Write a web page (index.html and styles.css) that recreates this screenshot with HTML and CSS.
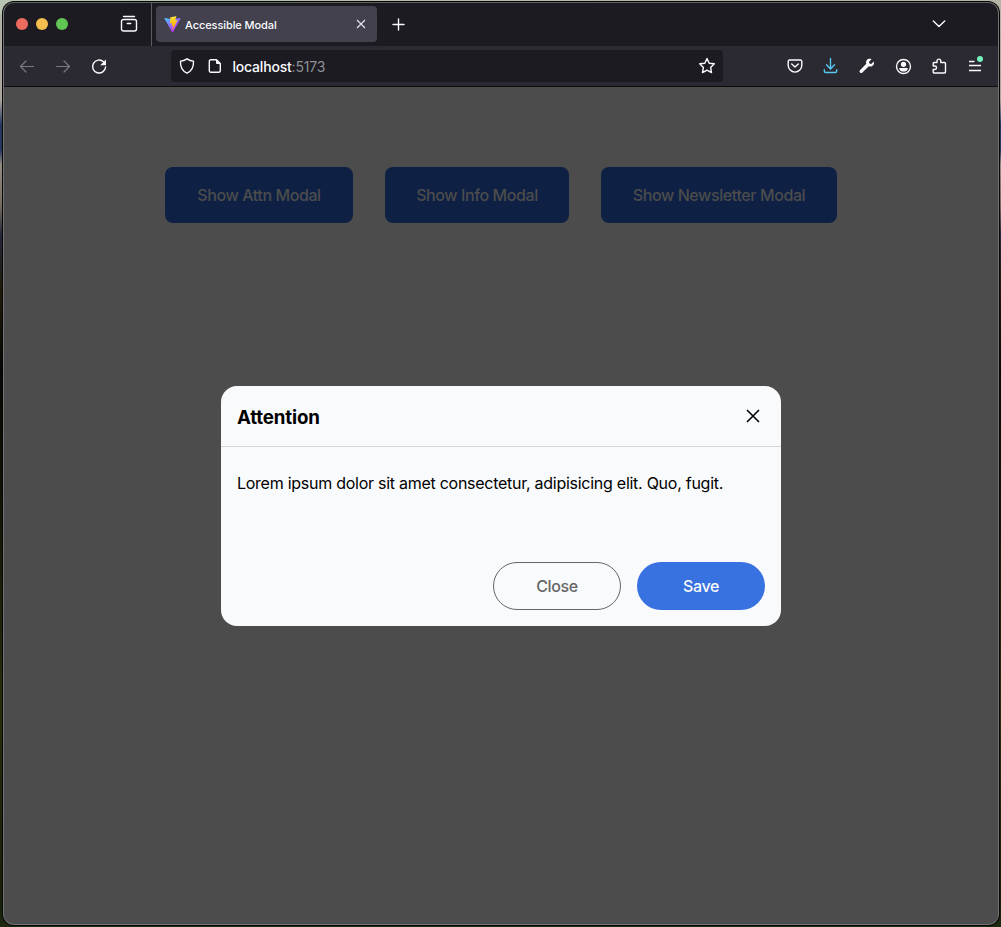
FILE: index.html
```html
<!DOCTYPE html>
<html lang="en">
<head>
<meta charset="utf-8">
<title>Accessible Modal</title>
<link rel="stylesheet" href="styles.css">
</head>
<body>
<div class="window">
  <div class="tabbar">
    <div class="lights"><i class="light red"></i><i class="light yellow"></i><i class="light green"></i></div>
    <svg class="icon view" viewBox="0 0 18 18"><path d="M3.500 1.500h11M3.500 4.500h11a2 2 0 0 1 2 2v7.500a2 2 0 0 1-2 2h-11a2 2 0 0 1-2-2V6.500a2 2 0 0 1 2-2zM7.300 8.500h3.400"/></svg>
    <div class="tab">
      <svg class="vite" viewBox="0 0 410 404">
        <defs>
          <linearGradient id="shield" x1="6" y1="33" x2="235" y2="344" gradientUnits="userSpaceOnUse"><stop stop-color="#41d1ff"/><stop offset="1" stop-color="#bd34fe"/></linearGradient>
          <linearGradient id="bolt" x1="195" y1="9" x2="236" y2="293" gradientUnits="userSpaceOnUse"><stop stop-color="#ffea83"/><stop offset=".08" stop-color="#ffdd35"/><stop offset="1" stop-color="#ffa800"/></linearGradient>
        </defs>
        <path fill="url(#shield)" d="M399.600 59.500 215.600 388.500c-3.800 6.800-13.500 6.900-17.400.100L10.600 59.600c-4.200-7.400 2.100-16.400 10.500-14.900l184.200 32.900c1.200.2 2.400.2 3.500 0l180.300-32.900c8.400-1.500 14.800 7.400 10.500 14.800z"/>
        <path fill="url(#bolt)" d="M293 1.600 156.800 28.300c-2.200.4-3.900 2.300-4 4.600l-8.400 141.400c-.2 3.300 2.900 5.900 6.100 5.200l37.900-8.800c3.500-.8 6.700 2.300 6 5.900l-11.300 55.100c-.8 3.700 2.700 6.900 6.300 5.800l23.400-7.100c3.600-1.100 7.100 2.100 6.300 5.800l-17.900 86.600c-1.100 5.400 6.100 8.400 9.100 3.700l2-3.100L323.400 101.700c1.800-3.700-1.300-7.900-5.400-7.100l-39 7.500c-3.700.7-6.800-2.700-5.700-6.300L298.700 7.600c1-3.600-2-7-5.700-6z"/>
      </svg>
      <span class="tab-title">Accessible Modal</span>
      <svg class="tab-x" viewBox="0 0 10 10"><path d="m1 1 8 8M9 1 1 9"/></svg>
    </div>
    <svg class="icon plus" viewBox="0 0 12 12"><path d="M5.500 0v11M0 5.500h11"/></svg>
    <svg class="icon chevron" viewBox="0 0 14 8"><path d="m1.300 1 5.700 5.500L12.700 1"/></svg>
  </div>
  <div class="toolbar">
    <svg class="icon back" viewBox="0 0 16 16"><path d="M14.500 8.500H1.800M7 3 1.500 8.500 7 14"/></svg>
    <svg class="icon forward" viewBox="0 0 16 16"><path d="M1.500 8.500h12.700M9 3l5.500 5.500L9 14"/></svg>
    <svg class="icon reload" viewBox="0 0 16 16"><path d="M12.500 3.700A6.500 6.500 0 1 0 14.600 9"/><path class="solid" d="M15 1.500v5.200a.6.6 0 0 1-.6.6H9.200z"/></svg>
    <div class="urlbar">
      <svg class="icon shield" viewBox="0 0 16 16"><path d="M8 .8c2 1.300 4.300 2.100 6.500 2.300.3 4.700-1.100 9.500-6.500 12.100C2.600 12.600 1.200 7.800 1.500 3.100 3.700 2.900 6 2.100 8 .8z"/></svg>
      <svg class="icon page" viewBox="0 0 14 16"><path d="M2.800 1.800h5.700l3.800 3.800v7.100a1.500 1.500 0 0 1-1.500 1.500h-8a1.500 1.500 0 0 1-1.500-1.500V3.300a1.500 1.500 0 0 1 1.500-1.500z"/><path class="solid" d="M8 1.500v3.600a1 1 0 0 0 1 1h3.500z"/></svg>
      <span class="url">localhost<span class="port">:5173</span></span>
      <svg class="icon star" viewBox="0 0 18 18"><path d="m9 1.500 2.200 4.700 5.100.6-3.700 3.600.9 5.200L9 13.100l-4.500 2.500.9-5.200L1.700 6.800l5.100-.6z"/></svg>
    </div>
    <div class="actions">
      <svg class="icon" viewBox="0 0 16 16"><path d="M2.500 2h11a1.300 1.300 0 0 1 1.300 1.300v4A6.800 6.800 0 0 1 1.200 7.300v-4A1.300 1.300 0 0 1 2.500 2zM4.700 6 8 9.100 11.300 6"/></svg>
      <svg class="icon download" viewBox="0 0 16 16"><path d="M7.500.5v10.300M3.500 6.800l4 4.200 4-4.200M1.300 11.800v1.200a1.500 1.500 0 0 0 1.500 1.500h9.400a1.500 1.500 0 0 0 1.500-1.500v-1.200"/></svg>
      <svg class="icon" viewBox="0 0 16 16"><path class="solid" d="M14.700 3.600 12.300 6l-1.900-.4-.4-1.900 2.500-2.500C10.700.5 8.700.8 7.700 2.300c-.8 1.100-.8 2.400-.4 3.500L1 12.200a1.600 1.600 0 0 0 2.400 2.300l6.400-6.300c1.600.6 3.300.2 4.400-1 .9-1 1-2.400.5-3.600z"/></svg>
      <svg class="icon account" viewBox="0 0 16 16"><circle cx="8.500" cy="8.500" r="7"/><circle class="solid" cx="8.500" cy="6.300" r="2.600"/><path class="solid" d="M4.200 9.900h8.600c0 2.500-1.900 3.600-4.300 3.600s-4.300-1.100-4.300-3.600z"/></svg>
      <svg class="icon" viewBox="0 0 16 16"><path d="M6 4.500V3a1.900 1.900 0 0 1 3.800 0v1.500h3.700a1 1 0 0 1 1 1V14a1 1 0 0 1-1 1H3.200a1 1 0 0 1-1-1v-2.500h1.600a1.700 1.700 0 0 0 0-3.500H2.200V5.500a1 1 0 0 1 1-1z"/></svg>
      <svg class="icon menu" viewBox="0 0 16 16"><path d="M2 3.500h5.500M2 7.500h12M2 12.500h12"/><circle class="dot" cx="13" cy="1" r="3"/></svg>
    </div>
  </div>
  <main class="content">
    <div class="triggers">
      <button class="trigger attn">Show Attn Modal</button>
      <button class="trigger info">Show Info Modal</button>
      <button class="trigger news">Show Newsletter Modal</button>
    </div>
    <section class="modal" role="dialog" aria-labelledby="modal-title">
      <header class="modal-head">
        <h1 class="modal-title" id="modal-title">Attention</h1>
        <svg class="modal-x" viewBox="0 0 14 14"><path d="m1 1 12 12M13 1 1 13"/></svg>
      </header>
      <p class="modal-text">Lorem ipsum dolor sit amet consectetur, adipisicing elit. Quo, fugit.</p>
      <footer class="modal-foot">
        <button class="pill outline">Close</button>
        <button class="pill primary">Save</button>
      </footer>
    </section>
  </main>
</div>
</body>
</html>
```
FILE: styles.css
```css
* { box-sizing: border-box; }

body {
  margin: 0;
  height: 927px;
  padding: 2px 2px 2px 3px;
  overflow: hidden;
  font-family: Inter, "Liberation Sans", sans-serif;
  background:
    linear-gradient(90deg, #b9c4b2, #b5b3a5) 0 0 / 100% 14px no-repeat,
    linear-gradient(#b5b3aa 0, #aaa59d 100px, #263760 125px, #263760 150px, #918b82 165px, #776d62 205px, #25283a 235px, #201b0b 290px, #080705 370px, #151306 500px, #292d0c 700px, #182009 900px, #1c2a10 927px);
}

.window {
  width: 996px;
  height: 923px;
  display: flex;
  flex-direction: column;
  overflow: hidden;
  border: 1px solid #747474;
  border-top-color: #5c625d;
  border-radius: 11px;
  box-shadow: 0 0 0 1px #050505;
  background: #4c4c4c;
}

svg { display: block; flex: none; }

.icon {
  width: 16px;
  height: 16px;
  overflow: visible;
  fill: none;
  stroke: #fbfbfe;
  stroke-width: 1.4;
  stroke-linecap: round;
  stroke-linejoin: round;
}
.solid { fill: #fbfbfe; stroke: none; }

.tabbar {
  height: 43px;
  flex: none;
  display: flex;
  align-items: center;
  background: #1c1b22;
}
.lights { display: flex; gap: 8px; margin: 0 0 1px 12px; }
.light { width: 12px; height: 12px; border-radius: 50%; }
.red { background: #ed6a5e; }
.yellow { background: #f5bf4f; }
.green { background: #61c554; }
.view { width: 18px; height: 18px; margin: 0 0 1px 52px; }

.tab {
  align-self: stretch;
  display: flex;
  align-items: center;
  width: 226px;
  margin-left: 13px;
  padding: 0 11px 0 12px;
  border-left: 1px solid #5b5b62;
  position: relative;
  z-index: 0;
}
.tab::before {
  content: "";
  position: absolute;
  z-index: -1;
  inset: 3px 0 4px 4px;
  border-radius: 4px;
  background: #42414d;
}
.vite { width: 17px; height: 17px; margin-bottom: 1px; }
.tab-title {
  margin-left: 4px;
  font-size: 11px;
  font-weight: 500;
  letter-spacing: -0.08px;
  color: #fbfbfe;
  white-space: nowrap;
}
.tab-x { width: 10px; height: 10px; margin: 0 0 1px auto; fill: none; stroke: #e4e4ea; stroke-width: 1.1; }
.plus { width: 12px; height: 12px; margin-left: 16px; }
.chevron { width: 14px; height: 8px; margin: 0 52px 2px auto; }

.toolbar {
  height: 41px;
  flex: none;
  display: flex;
  align-items: center;
  background: #2b2a33;
  border-bottom: 1px solid #0c0c0d;
}
.back { margin-left: 15px; }
.forward { margin-left: 20px; }
.back, .forward { stroke: #7a7981; stroke-width: 1.2; }
.reload { margin-left: 20px; }
.urlbar {
  width: 552px;
  height: 32px;
  margin-left: 64px;
  padding: 0 7px 0 8px;
  display: flex;
  align-items: center;
  border-radius: 4px;
  background: #1c1b22;
}
.page { width: 14px; margin-left: 13px; }
.url { margin: 1px 0 0 10.5px; font-size: 14px; font-weight: 500; letter-spacing: -0.2px; color: #fbfbfe; }
.port { font-weight: 400; color: #8f8f96; }
.star { width: 18px; height: 18px; margin-left: auto; }
.actions { display: flex; gap: 20px; margin-left: 64px; }
.download { stroke: #54c8f0; }
.menu { stroke-linecap: butt; }
.dot { fill: #76f3bc; stroke: none; }

.content {
  flex: 1;
  display: flex;
  flex-direction: column;
  align-items: center;
  padding-top: 80px;
  background: #4c4c4c;
}
.triggers { display: flex; gap: 32px; }
button {
  padding: 0;
  border: 0;
  font-family: inherit;
  font-size: 16px;
  font-weight: 500;
  letter-spacing: -0.4px;
  white-space: nowrap;
}
.trigger {
  height: 56px;
  border-radius: 8px;
  color: #4c4c4c;
  background: #0e2145;
}
.attn { width: 188px; }
.info { width: 184px; }
.news { width: 236px; }

.modal {
  width: 560px;
  height: 240px;
  margin-top: 163px;
  border-radius: 16px;
  display: flex;
  flex-direction: column;
  color: #000;
  background: #f9fafc;
}
.modal-head {
  height: 61px;
  padding: 2px 21px 0 16px;
  display: flex;
  align-items: center;
  justify-content: space-between;
  border-bottom: 1px solid #d4d5d7;
}
.modal-title { margin: 0; font-size: 18.72px; font-weight: 700; letter-spacing: -0.15px; }
.modal-x { width: 14px; height: 14px; margin-top: -3px; fill: none; stroke: #000; stroke-width: 1.6; }
.modal-text { margin: 24px 16px 0; font-size: 16px; line-height: 24px; letter-spacing: -0.265px; white-space: nowrap; }
.modal-foot { margin-top: auto; padding: 16px; display: flex; justify-content: flex-end; gap: 16px; }
.pill { width: 128px; height: 48px; border-radius: 24px; }
.outline { border: 1px solid #666; color: #666; background: none; }
.primary { color: #f9fafc; background: #3871e0; }
```
